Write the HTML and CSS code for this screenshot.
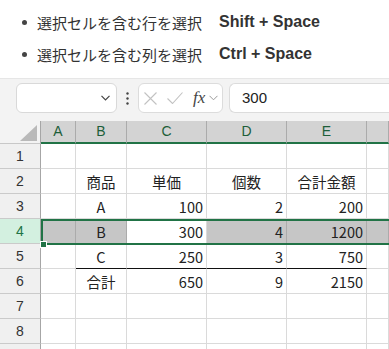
FILE: index.html
```html
<!DOCTYPE html>
<html lang="ja">
<head>
    <meta charset="UTF-8">
    <meta name="viewport" content="width=device-width, initial-scale=1.0">
    <title>行・列の選択</title>
    <link rel="stylesheet" href="styles.css">
</head>
<body>
    <ul class="tips">
        <li>選択セルを含む行を選択<b>Shift + Space</b></li>
        <li>選択セルを含む列を選択<b>Ctrl + Space</b></li>
    </ul>

    <div class="excel">
        <div class="fbar">
            <div class="namebox">
                <svg width="9" height="6" viewBox="0 0 9 6"><path d="M0.5 0.8l4 4 4-4" fill="none" stroke="#444" stroke-width="1.2"/></svg>
            </div>
            <div class="dots">
                <svg width="3" height="13" viewBox="0 0 3 13"><circle cx="1.5" cy="1.5" r="1.2" fill="#444"/><circle cx="1.5" cy="6.5" r="1.2" fill="#444"/><circle cx="1.5" cy="11.5" r="1.2" fill="#444"/></svg>
            </div>
            <div class="fbtns">
                <svg width="13" height="13" viewBox="0 0 13 13"><path d="M0.5 0.5l12 12M12.5 0.5l-12 12" stroke="#c2c2c2" stroke-width="1.1"/></svg>
                <svg width="16" height="12" viewBox="0 0 16 12"><path d="M0.5 6.5l5 5 10-11" fill="none" stroke="#c2c2c2" stroke-width="1.1"/></svg>
                <i class="fx">fx</i>
                <svg class="fxdown" width="9" height="6" viewBox="0 0 9 6"><path d="M0.5 0.8l4 4 4-4" fill="none" stroke="#999" stroke-width="1"/></svg>
            </div>
            <div class="finput">300</div>
        </div>

        <div class="sheet">
            <div class="corner"><svg width="17" height="16" viewBox="0 0 17 16"><path d="M0 16L17 0V16Z" fill="#b9b9b9"/></svg></div>
            <div class="c ch">A</div>
            <div class="c ch">B</div>
            <div class="c ch">C</div>
            <div class="c ch">D</div>
            <div class="c ch">E</div>
            <div class="c ch"></div>

            <div class="c rh">1</div>
            <div class="c"></div><div class="c"></div><div class="c"></div><div class="c"></div><div class="c"></div><div class="c"></div>

            <div class="c rh">2</div>
            <div class="c"></div>
            <div class="c m">商品</div>
            <div class="c m">単価</div>
            <div class="c m">個数</div>
            <div class="c m">合計金額</div>
            <div class="c"></div>

            <div class="c rh">3</div>
            <div class="c"></div>
            <div class="c m">A</div>
            <div class="c r">100</div>
            <div class="c r">2</div>
            <div class="c r">200</div>
            <div class="c"></div>

            <div class="c rh sel">4</div>
            <div class="c g"></div>
            <div class="c m g">B</div>
            <div class="c r">300</div>
            <div class="c r g">4</div>
            <div class="c r g">1200</div>
            <div class="c g"></div>

            <div class="c rh">5</div>
            <div class="c"></div>
            <div class="c m tl">C</div>
            <div class="c r tl">250</div>
            <div class="c r tl">3</div>
            <div class="c r tl">750</div>
            <div class="c"></div>

            <div class="c rh">6</div>
            <div class="c"></div>
            <div class="c m">合計</div>
            <div class="c r">650</div>
            <div class="c r">9</div>
            <div class="c r">2150</div>
            <div class="c"></div>

            <div class="c rh">7</div>
            <div class="c"></div><div class="c"></div><div class="c"></div><div class="c"></div><div class="c"></div><div class="c"></div>

            <div class="c rh">8</div>
            <div class="c"></div><div class="c"></div><div class="c"></div><div class="c"></div><div class="c"></div><div class="c"></div>

            <!-- row 9, only its top edge shows -->
            <div class="c rh"></div>
            <div class="c"></div><div class="c"></div><div class="c"></div><div class="c"></div><div class="c"></div><div class="c"></div>

            <!-- selected row 4 -->
            <div class="selection"></div>
            <div class="handle"></div>
        </div>
    </div>
</body>
</html>
```

FILE: styles.css
```css
/* General */
body {
    margin: 0;
    font-family: "Noto Sans CJK JP", sans-serif;
    color: #333;
    background-color: #fff;
    overflow: hidden;
}

/* Shortcut list */
.tips {
    list-style: none;
    margin: 0;
    padding: 6px 0 0;
    height: 78px;
    box-sizing: border-box;
    font-size: 15px;
}

.tips li {
    display: flex;
    align-items: center;
    height: 32px;
}

.tips li::before {
    content: "";
    width: 5px;
    height: 5px;
    border-radius: 50%;
    background-color: #444;
    margin: 0 10px 0 22px;
}

.tips b {
    font-family: "Liberation Sans", Arial, sans-serif;
    font-size: 16px;
    margin-left: 17px;
    color: #333;
}

/* Excel window */
.excel {
    background-color: #f3f3f3;
    border-top: 1px solid #e6e6e6;
}

.fbar {
    display: flex;
    align-items: center;
    height: 42px;
    padding: 4px 0 8px 16px;
    box-sizing: border-box;
}

.namebox {
    width: 101px;
    height: 30px;
    background-color: #fff;
    border: 1px solid #d9d9d9;
    border-radius: 6px;
    box-sizing: border-box;
    display: flex;
    align-items: center;
    justify-content: flex-end;
    padding-right: 6px;
}

.dots {
    width: 21px;
    display: flex;
    justify-content: center;
}

.fbtns {
    width: 85px;
    height: 30px;
    background-color: #fff;
    border: 1px solid #dcdcdc;
    border-radius: 6px;
    box-sizing: border-box;
    display: flex;
    align-items: center;
    gap: 10px;
    padding-left: 5px;
}

.fx {
    font-family: "Liberation Serif", serif;
    font-size: 17px;
    color: #444;
    line-height: 1;
    margin-top: -2px;
}

.fxdown {
    margin-left: -6px;
}

.finput {
    flex: 1;
    height: 30px;
    margin-left: 6px;
    background-color: #fff;
    border: 1px solid #dcdcdc;
    border-right: none;
    border-radius: 6px 0 0 6px;
    box-sizing: border-box;
    padding-left: 12px;
    font-family: "Liberation Sans", Arial, sans-serif;
    font-size: 15px;
    line-height: 28px;
    color: #222;
}

/* Sheet grid */
.sheet {
    position: relative;
    display: grid;
    grid-template-columns: 41px 35px 51px 80px 80px 80px 1fr;
    grid-template-rows: 23px repeat(9, 25px);
    height: 228px;
    overflow: hidden;
    background-color: #fff;
    font-size: 14.5px;
    color: #222;
}

.c {
    display: flex;
    align-items: center;
    padding: 0 3px;
    border-right: 1px solid #dadada;
    border-bottom: 1px solid #dadada;
    box-sizing: border-box;
    white-space: nowrap;
}

.m {
    justify-content: center;
}

.r {
    justify-content: flex-end;
}

.corner {
    display: flex;
    align-items: flex-end;
    justify-content: flex-end;
    padding: 0 3px 2px 0;
    background-color: #f3f3f3;
    border-right: 1px solid #a6a6a6;
    border-bottom: 1px solid #c8c8c8;
    box-sizing: border-box;
}

.ch {
    justify-content: center;
    padding-bottom: 2px;
    background-color: #d3d3d3;
    border-right-color: #ababab;
    border-bottom: 2px solid #217346;
    color: #1d5e39;
    font-family: "Liberation Sans", Arial, sans-serif;
    font-size: 14px;
}

.rh {
    justify-content: center;
    background-color: #f0f0f0;
    border-right-color: #a6a6a6;
    border-bottom-color: #cacaca;
    color: #333;
    font-family: "Liberation Sans", Arial, sans-serif;
    font-size: 14px;
}

.rh.sel {
    background-color: #d3f0e0;
    color: #217346;
}

.g {
    background-color: #c6c6c6;
    border-right-color: #ababab;
}

.tl {
    border-bottom-color: #111;
}

.selection {
    position: absolute;
    left: 41px;
    top: 98px;
    right: -4px;
    height: 26px;
    border: 2px solid #217346;
    box-sizing: border-box;
    pointer-events: none;
}

.handle {
    position: absolute;
    left: 40px;
    top: 120px;
    width: 5px;
    height: 5px;
    background-color: #217346;
    border: 1px solid #fff;
}
```
